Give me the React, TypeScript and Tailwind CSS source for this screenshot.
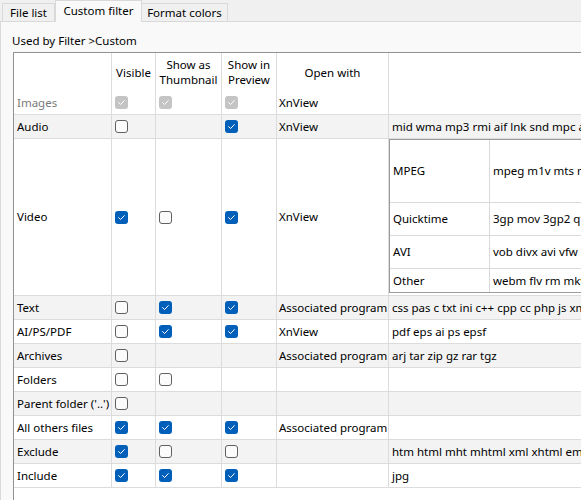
import React from "react";

type CB = "on" | "off" | "dis" | null;

function Check({ v }: { v: CB }) {
  if (!v) return null;
  if (v === "off")
    return <div className="w-[13px] h-[13px] rounded-[3px] border border-[#606060] bg-[#fbfbfb]" />;
  const bg = v === "on" ? "bg-[#005fb8]" : "bg-[#c4c4c4]";
  return (
    <div className={`w-[13px] h-[13px] rounded-[3px] ${bg} flex items-center justify-center`}>
      <svg width="13" height="13" viewBox="0 0 13 13">
        <path d="M3.6 6.6 L5.6 8.5 L9.3 4.6" fill="none" stroke="#ffffff" strokeWidth="1" strokeLinecap="round" strokeLinejoin="round" />
      </svg>
    </div>
  );
}

type RowData = {
  name: string;
  gray?: boolean;
  vis: CB;
  thumb: CB;
  prev: CB;
  open: string;
  ext: string;
  bg: string;
};

const rows: RowData[] = [
  { name: "Audio", vis: "off", thumb: null, prev: "on", open: "XnView", ext: "mid wma mp3 rmi aif lnk snd mpc au wav ogg flac", bg: "bg-[#f3f3f3]" },
  { name: "Video", vis: "on", thumb: "off", prev: "on", open: "XnView", ext: "", bg: "bg-white" },
  { name: "Text", vis: "off", thumb: "on", prev: "on", open: "Associated program", ext: "css pas c txt ini c++ cpp cc php js xml", bg: "bg-[#f3f3f3]" },
  { name: "AI/PS/PDF", vis: "off", thumb: "on", prev: "on", open: "XnView", ext: "pdf eps ai ps epsf", bg: "bg-white" },
  { name: "Archives", vis: "off", thumb: null, prev: null, open: "Associated program", ext: "arj tar zip gz rar tgz", bg: "bg-[#f3f3f3]" },
  { name: "Folders", vis: "off", thumb: "off", prev: null, open: "", ext: "", bg: "bg-white" },
  { name: "Parent folder ('..')", vis: "off", thumb: null, prev: null, open: "", ext: "", bg: "bg-[#f3f3f3]" },
  { name: "All others files", vis: "on", thumb: "on", prev: "on", open: "Associated program", ext: "", bg: "bg-white" },
  { name: "Exclude", vis: "on", thumb: "off", prev: "off", open: "", ext: "htm html mht mhtml xml xhtml emf", bg: "bg-[#f3f3f3]" },
  { name: "Include", vis: "on", thumb: "on", prev: "on", open: "", ext: "jpg", bg: "bg-white" },
];

const nested = [
  { k: "MPEG", v: "mpeg m1v mts m2v mpg mpe m2ts", h: "h-[63px] border-b" },
  { k: "Quicktime", v: "3gp mov 3gp2 qt 3g2 m4v", h: "h-[33px] border-b" },
  { k: "AVI", v: "vob divx avi vfw wmv asf", h: "h-[33px] border-b" },
  { k: "Other", v: "webm flv rm mkv ogv", h: "h-[23px]" },
];

function NestedTable() {
  return (
    <div className="h-[154px] w-[300px] border border-[#9a9a9a] bg-white flex flex-col">
      {nested.map((n) => (
        <div key={n.k} className={`${n.h} border-[#d9d9d9] flex`}>
          <div className="w-[100px] border-r border-[#d9d9d9] pl-[3px] flex items-center">{n.k}</div>
          <div className="flex-1 pl-[3px] flex items-center whitespace-nowrap">{n.v}</div>
        </div>
      ))}
    </div>
  );
}

function DataRow({ r }: { r: RowData }) {
  const isVideo = r.name === "Video";
  return (
    <div className={`flex ${isVideo ? "h-[157px]" : "h-[24px]"} border-b border-[#dcdcdc] ${r.bg}`}>
      <div className="w-[98px] shrink-0 border-r border-[#dcdcdc] pl-[3px] flex items-center whitespace-nowrap overflow-hidden">{r.name}</div>
      <div className="w-[44px] shrink-0 border-r border-[#dcdcdc] pl-[3px] flex items-center"><Check v={r.vis} /></div>
      <div className="w-[66px] shrink-0 border-r border-[#dcdcdc] pl-[3px] flex items-center"><Check v={r.thumb} /></div>
      <div className="w-[55px] shrink-0 border-r border-[#dcdcdc] pl-[3px] flex items-center"><Check v={r.prev} /></div>
      <div className="w-[112px] shrink-0 border-r border-[#dcdcdc] pl-[2px] flex items-center whitespace-nowrap overflow-hidden">{r.open}</div>
      {isVideo ? (
        <div className="w-[400px] shrink-0 flex items-start"><NestedTable /></div>
      ) : (
        <div className="w-[400px] shrink-0 pl-[3px] flex items-center whitespace-nowrap">{r.ext}</div>
      )}
    </div>
  );
}

export default function App() {
  return (
    <div className="w-[581px] h-[500px] overflow-hidden bg-[#f0f0f0] font-['Noto_Sans',sans-serif] text-[11.5px] text-black flex flex-col">
      <div className="h-[21px] shrink-0 flex items-end pl-[2px]">
        <div className="w-[53px] h-[18px] border border-b-0 border-[#d9d9d9] bg-[#f0f0f0] flex items-center justify-center">File list</div>
        <div className="w-[87px] h-[22px] -mb-px relative z-10 border border-b-0 border-[#d9d9d9] bg-[#f9f9f9] flex items-center justify-center pb-[2px]">Custom filter</div>
        <div className="w-[86px] h-[18px] border border-b-0 border-l-0 border-[#d9d9d9] bg-[#f0f0f0] flex items-center justify-center">Format colors</div>
      </div>
      <div className="flex-1 border-t border-l border-[#d9d9d9] bg-[#f9f9f9] flex flex-col">
        <div className="pl-[11px] pt-[11px] h-[30px] leading-[15px]">Used by Filter &gt;Custom</div>
        <div className="ml-[12px] flex-1 border-t border-l border-[#8e9196] bg-white w-[900px] flex flex-col">
          <div className="flex h-[38px] leading-[15px] text-center">
            <div className="w-[98px] shrink-0 border-r border-[#dcdcdc]" />
            <div className="w-[44px] shrink-0 border-r border-[#dcdcdc] flex items-center justify-center">Visible</div>
            <div className="w-[66px] shrink-0 border-r border-[#dcdcdc] flex items-center justify-center">Show as<br />Thumbnail</div>
            <div className="w-[55px] shrink-0 border-r border-[#dcdcdc] flex items-center justify-center">Show in<br />Preview</div>
            <div className="w-[112px] shrink-0 border-r border-[#dcdcdc] flex items-center justify-center">Open with</div>
            <div className="w-[400px] shrink-0" />
          </div>
          <div className="flex h-[24px] border-b border-[#dcdcdc] bg-white">
            <div className="w-[98px] shrink-0 border-r border-[#dcdcdc] pl-[3px] flex items-center text-[#7a7a7a]">Images</div>
            <div className="w-[44px] shrink-0 border-r border-[#dcdcdc] pl-[3px] flex items-center"><Check v="dis" /></div>
            <div className="w-[66px] shrink-0 border-r border-[#dcdcdc] pl-[3px] flex items-center"><Check v="dis" /></div>
            <div className="w-[55px] shrink-0 border-r border-[#dcdcdc] pl-[3px] flex items-center"><Check v="dis" /></div>
            <div className="w-[112px] shrink-0 border-r border-[#dcdcdc] pl-[2px] flex items-center">XnView</div>
            <div className="w-[400px] shrink-0" />
          </div>
          {rows.map((r) => (
            <DataRow key={r.name} r={r} />
          ))}
        </div>
      </div>
    </div>
  );
}
